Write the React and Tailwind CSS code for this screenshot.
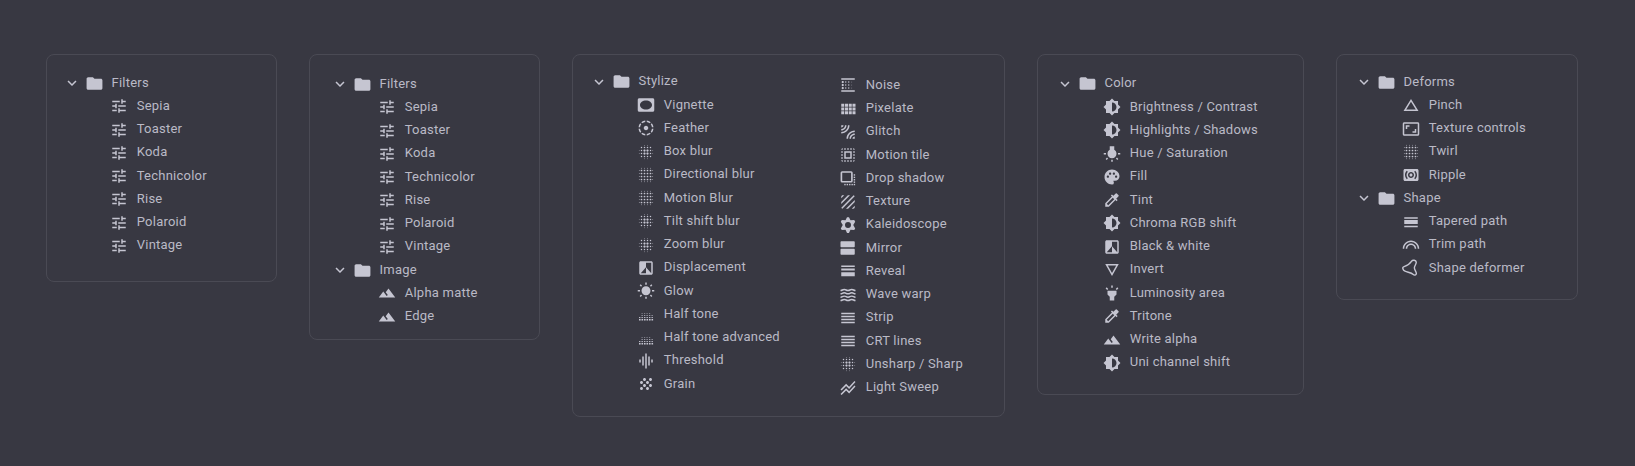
import {
  MdTune, MdLandscape, MdVignette, MdFilterTiltShift, MdBlurOn, MdFilterBAndW, MdWbSunny,
  MdGraphicEq, MdGrain, MdBlurLinear, MdLeakAdd, MdSelectAll, MdTexture,
  MdWaves, MdReorder, MdStackedLineChart, MdBrightness6, MdWbIncandescent, MdPalette,
  MdColorize, MdChangeHistory, MdHighlight, MdAspectRatio, MdSurroundSound, MdLooks,
  MdFolder, MdExpandMore,
} from "react-icons/md";

const Svg = ({ size = 18, box = 24, children, className }) => (
  <svg viewBox={`0 0 ${box} ${box}`} width={size} height={size} fill="currentColor" className={className}>
    {children}
  </svg>
);

const DotGrid = (p) => (
  <Svg {...p} box={18}>
    {[4.5, 7.5, 10.5, 13.5].map((y) =>
      [4.5, 7.5, 10.5, 13.5].map((x) => <circle key={`${x}-${y}`} cx={x} cy={y} r=".85" />)
    )}
    {[4.5, 7.5, 10.5, 13.5].map((n) => (
      <g key={n}>
        <circle cx={n} cy="2.3" r=".45" />
        <circle cx={n} cy="15.7" r=".45" />
        <circle cx="2.3" cy={n} r=".45" />
        <circle cx="15.7" cy={n} r=".45" />
      </g>
    ))}
  </Svg>
);

const HalfTone = (p) => (
  <Svg {...p} box={18}>
    {[2, 4.5, 7, 9.5, 12, 14.5].map((x, i) => (
      <g key={x}>
        <rect x={x} y="14" width="1.6" height="1.5" />
        <rect x={x} y="12" width="1.4" height="1.1" opacity=".9" />
        {i > 0 && <rect x={x} y="10" width="1.3" height="1" opacity=".7" />}
        {i > 0 && i < 5 && <rect x={x} y="8" width="1.2" height="1" opacity=".5" />}
      </g>
    ))}
  </Svg>
);

const Pixels = (p) => (
  <Svg {...p}>
    <path d="M3 9h4V5H3v4zm0 5h4v-4H3v4zm5 0h4v-4H8v4zm5 0h4v-4h-4v4zM8 9h4V5H8v4zm5-4v4h4V5h-4zm5 9h4v-4h-4v4zM3 19h4v-4H3v4zm5 0h4v-4H8v4zm5 0h4v-4h-4v4zm5 0h4v-4h-4v4zm0-14v4h4V5h-4z" />
  </Svg>
);

const Star = (p) => (
  <Svg {...p}>
    <path
      fillRule="evenodd"
      d="M10.7 1.5h2.6L15.3 5.8l5-.5 1.3 2.2L19 12l2.6 4.5-1.3 2.2-5-.5-2 4.3h-2.6l-2-4.3-5 .5-1.3-2.2L5 12 2.4 7.5l1.3-2.2 5 .5zM12 8a4 4 0 100 8 4 4 0 000-8z"
    />
  </Svg>
);

const Agenda = (p) => (
  <Svg {...p}>
    <path d="M20 13H3c-.55 0-1 .45-1 1v6c0 .55.45 1 1 1h17c.55 0 1-.45 1-1v-6c0-.55-.45-1-1-1zm0-10H3c-.55 0-1 .45-1 1v6c0 .55.45 1 1 1h17c.55 0 1-.45 1-1V4c0-.55-.45-1-1-1z" />
  </Svg>
);

const Reveal = (p) => (
  <Svg {...p}>
    <path d="M3 4.7h18v1.8H3zM3 8.8h18v2.6H3zM3 13.8h18V19H3z" />
  </Svg>
);

const Tapered = (p) => (
  <Svg {...p}>
    <path d="M3 5.5h18v2H3zM3 9.3h18v5.4H3zM3 17h18v2H3z" />
  </Svg>
);

const TriangleDown = (p) => (
  <Svg {...p}>
    <path d="M3 4l9 16 9-16H3zm3.38 2h11.25L12 16 6.38 6z" />
  </Svg>
);

const DropShadow = (p) => (
  <Svg {...p}>
    <rect x="3.2" y="4" width="14" height="13" rx="1" fill="none" stroke="currentColor" strokeWidth="2.2" />
    {[7, 10.2, 13.4, 16.6, 19.8].map((y) => (
      <rect key={y} x="19.6" y={y} width="1.9" height="1.9" />
    ))}
    {[7, 10.2, 13.4, 16.6].map((x) => (
      <rect key={x} x={x} y="19.8" width="1.9" height="1.9" />
    ))}
  </Svg>
);

const Deformer = (p) => (
  <Svg {...p}>
    <path
      fill="none"
      stroke="currentColor"
      strokeWidth="1.9"
      strokeLinejoin="round"
      d="M1.200 13c-.5-1.400.200-2.400 1.600-2.900C7.500 8.700 10.500 6.500 12.600 3.200 14.200.8 18.600 1.400 19 4.200c.3 2.500-2.500 4.800-2.500 7.600 0 3 3 5.300 2.600 7.800-.2 2-2.700 2.400-4 1.200C12 17.900 7.500 18 4 16.300 2.600 15.600 1.600 14.500 1.200 13z"
    />
  </Svg>
);

const tune = (name) => [MdTune, name];
const filters = ["Sepia", "Toaster", "Koda", "Technicolor", "Rise", "Polaroid", "Vintage"].map(tune);

const stylizeLeft = [
  [MdVignette, "Vignette"],
  [MdFilterTiltShift, "Feather"],
  [MdBlurOn, "Box blur"],
  [DotGrid, "Directional blur"],
  [DotGrid, "Motion Blur"],
  [MdBlurOn, "Tilt shift blur"],
  [MdBlurOn, "Zoom blur"],
  [MdFilterBAndW, "Displacement"],
  [MdWbSunny, "Glow"],
  [HalfTone, "Half tone"],
  [HalfTone, "Half tone advanced"],
  [MdGraphicEq, "Threshold"],
  [MdGrain, "Grain"],
];

const stylizeRight = [
  [MdBlurLinear, "Noise"],
  [Pixels, "Pixelate"],
  [MdLeakAdd, "Glitch"],
  [MdSelectAll, "Motion tile"],
  [DropShadow, "Drop shadow"],
  [MdTexture, "Texture"],
  [Star, "Kaleidoscope"],
  [Agenda, "Mirror"],
  [Reveal, "Reveal"],
  [MdWaves, "Wave warp"],
  [MdReorder, "Strip"],
  [MdReorder, "CRT lines"],
  [MdBlurOn, "Unsharp / Sharp"],
  [MdStackedLineChart, "Light Sweep"],
];

const color = [
  [MdBrightness6, "Brightness / Contrast"],
  [MdBrightness6, "Highlights / Shadows"],
  [MdWbIncandescent, "Hue / Saturation"],
  [MdPalette, "Fill"],
  [MdColorize, "Tint"],
  [MdBrightness6, "Chroma RGB shift"],
  [MdFilterBAndW, "Black & white"],
  [TriangleDown, "Invert"],
  [MdHighlight, "Luminosity area"],
  [MdColorize, "Tritone"],
  [MdLandscape, "Write alpha"],
  [MdBrightness6, "Uni channel shift"],
];

const deforms = [
  [MdChangeHistory, "Pinch"],
  [MdAspectRatio, "Texture controls"],
  [DotGrid, "Twirl"],
  [MdSurroundSound, "Ripple"],
];

const shapes = [
  [Tapered, "Tapered path"],
  [MdLooks, "Trim path"],
  [Deformer, "Shape deformer"],
];

const Label = ({ children }) => (
  <span className="pb-[1px] text-[13px] leading-[22px] tracking-[0.23px] text-[#babac6] whitespace-nowrap">
    {children}
  </span>
);

const Rows = ({ items }) =>
  items.map(([Icon, name]) => (
    <li key={name} className="flex h-[23.25px] items-center gap-[8.75px]">
      <Icon size={18} />
      <Label>{name}</Label>
    </li>
  ));

const Group = ({ name, items }) => (
  <section>
    <h2 className="flex h-[23.25px] items-center font-normal">
      <MdExpandMore size={18} />
      <MdFolder size={19} className="ml-[4px]" />
      <span className="ml-[7.5px] flex"><Label>{name}</Label></span>
    </h2>
    <ul className="pl-[47px]">
      <Rows items={items} />
    </ul>
  </section>
);

const Card = ({ className, children }) => (
  <div className={`box-border shrink-0 rounded-[8px] border border-[#4a4a54] ${className}`}>{children}</div>
);

export default function App() {
  return (
    <main
      className="flex h-[466px] w-[1635px] items-start gap-8 overflow-hidden bg-[#383842] pt-[54px] pl-[46px] font-[Roboto,'Liberation_Sans',sans-serif] text-[#c5c5d1]"
    >
      <Card className="h-[228px] w-[231px] pl-[16px] pt-[16.5px]">
        <Group name="Filters" items={filters} />
      </Card>
      <Card className="h-[286px] w-[231px] pl-[21px] pt-[17.5px]">
        <Group name="Filters" items={filters} />
        <Group name="Image" items={[[MdLandscape, "Alpha matte"], [MdLandscape, "Edge"]]} />
      </Card>
      <Card className="flex h-[363px] w-[433px] pl-[17px]">
        <div className="w-[202px] pt-[15.25px]">
          <Group name="Stylize" items={stylizeLeft} />
        </div>
        <ul className="pl-[47px] pt-[18.75px]">
          <Rows items={stylizeRight} />
        </ul>
      </Card>
      <Card className="h-[341px] w-[267px] pl-[18px] pt-[17.25px]">
        <Group name="Color" items={color} />
      </Card>
      <Card className="h-[246px] w-[242px] pl-[18px] pt-[15.5px]">
        <Group name="Deforms" items={deforms} />
        <Group name="Shape" items={shapes} />
      </Card>
    </main>
  );
}
